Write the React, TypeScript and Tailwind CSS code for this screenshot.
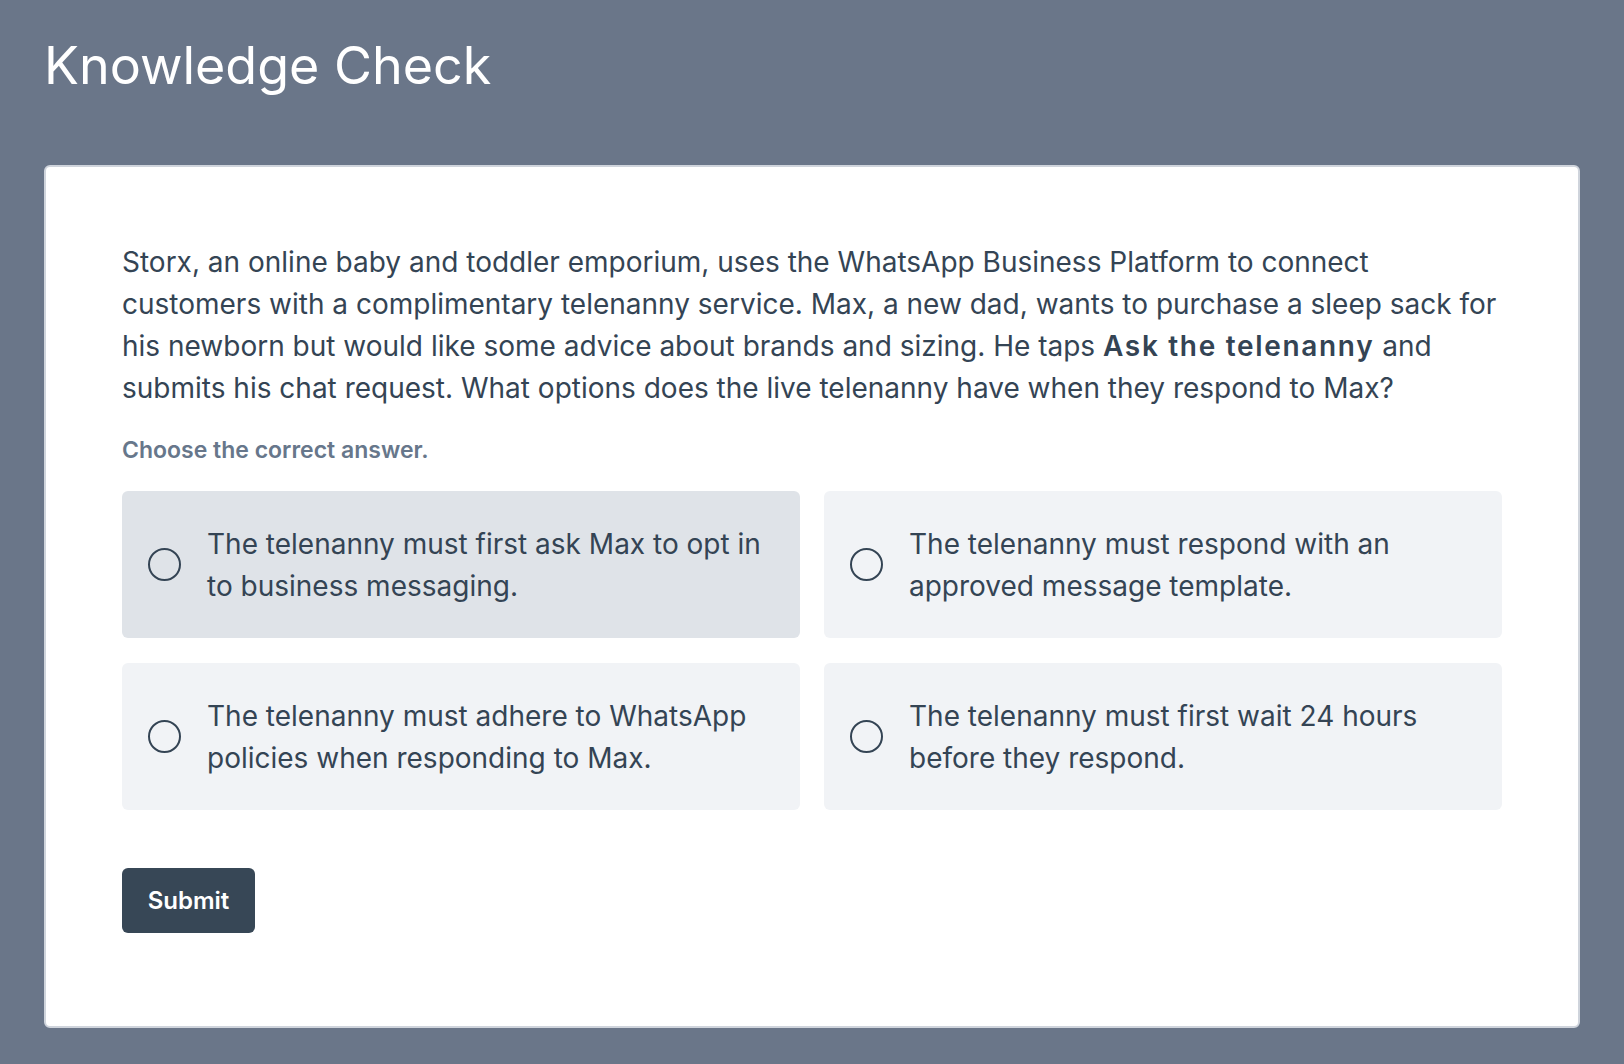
import { useState } from "react";

const options = [
    ["The telenanny must first ask Max to opt in", "to business messaging."],
    ["The telenanny must respond with an", "approved message template."],
    ["The telenanny must adhere to WhatsApp", "policies when responding to Max."],
    ["The telenanny must first wait 24 hours", "before they respond."],
];

export default function App() {
    const [hovered] = useState(0);

    return (
        <div
            className="min-h-screen bg-[#6a7689] px-[44px] pb-[38px]"
            style={{ fontFamily: "Inter, 'Noto Sans', sans-serif" }}
        >
            <h1 className="flex h-[165px] items-start pt-[30px] text-[52px] font-normal leading-[72px] text-white">
                Knowledge Check
            </h1>
            <div className="rounded-md border-2 border-[#cfd4dc] bg-white px-[76px] pt-[74px] pb-[93px]">
                <p className="text-[28px] leading-[42px] text-[#344454]">
                    Storx, an online baby and toddler emporium, uses the WhatsApp Business Platform to connect
                    <br />
                    customers with a complimentary telenanny service. Max, a new dad, wants to purchase a sleep sack for
                    <br />
                    his newborn but would like some advice about brands and sizing. He taps{" "}
                    <span className="font-semibold tracking-[0.06em]">Ask the telenanny</span> and
                    <br />
                    submits his chat request. What options does the live telenanny have when they respond to Max?
                </p>
                <p className="mt-[26px] text-[23px] font-semibold leading-[30px] text-[#67778b]">
                    Choose the correct answer.
                </p>
                <div className="mt-[26px] grid grid-cols-2 gap-x-[24px] gap-y-[25px]">
                    {options.map((lines, i) => (
                        <label
                            key={i}
                            className={`flex h-[147px] cursor-pointer items-center gap-[26px] rounded-md px-[26px] ${
                                i === hovered ? "bg-[#dfe3e8]" : "bg-[#f1f3f6]"
                            }`}
                        >
                            <span className="h-[33px] w-[33px] shrink-0 rounded-full border-2 border-[#344454]" />
                            <span className="text-[28px] leading-[42px] text-[#344454]">
                                {lines[0]}
                                <br />
                                {lines[1]}
                            </span>
                        </label>
                    ))}
                </div>
                <button className="mt-[58px] h-[65px] w-[133px] rounded-md bg-[#374756] text-[24px] font-semibold text-white">
                    Submit
                </button>
            </div>
        </div>
    );
}
